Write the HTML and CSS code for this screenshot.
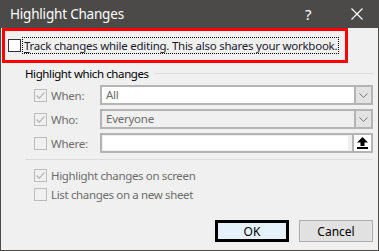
FILE: index.html
```html
<!DOCTYPE html>
<html>
  <head>
    <meta charset="utf-8" />
    <title>Highlight Changes</title>
    <link rel="stylesheet" href="styles.css">
  </head>
  <body>
    <div class="window">
      <div class="titlebar">
        <span class="title">Highlight Changes</span>
        <span class="help">?</span>
        <span class="close">
          <svg width="12" height="12" viewBox="0 0 12 12"><path d="M0.5 0.5 L11.5 11.5 M11.5 0.5 L0.5 11.5" stroke="#fff" stroke-width="1.2" fill="none"/></svg>
        </span>
      </div>

      <div class="track">
        <span class="box"></span>
        <span class="focus"><u>T</u>rack changes while editing. This also shares your workbook.</span>
      </div>

      <div class="group-head">
        <span class="group-label">Highlight which changes</span>
        <span class="line"></span>
      </div>

      <div class="row">
        <span class="box disabled checked"><svg width="11" height="11" viewBox="0 0 11 11"><path d="M1.5 5.5 L4.2 8.2 L9.5 2.5" stroke="#b9b9b9" stroke-width="1.3" fill="none"/></svg></span>
        <span class="row-label">When:</span>
        <div class="field white">
          <span class="value">All</span>
          <span class="drop"><svg width="9" height="5" viewBox="0 0 9 5"><path d="M0.5 0.5 L4.5 4.5 L8.5 0.5" stroke="#777" stroke-width="1" fill="none"/></svg></span>
        </div>
      </div>
      <div class="row">
        <span class="box disabled checked"><svg width="11" height="11" viewBox="0 0 11 11"><path d="M1.5 5.5 L4.2 8.2 L9.5 2.5" stroke="#b9b9b9" stroke-width="1.3" fill="none"/></svg></span>
        <span class="row-label">Who:</span>
        <div class="field">
          <span class="value">Everyone</span>
          <span class="drop"><svg width="9" height="5" viewBox="0 0 9 5"><path d="M0.5 0.5 L4.5 4.5 L8.5 0.5" stroke="#777" stroke-width="1" fill="none"/></svg></span>
        </div>
      </div>
      <div class="row">
        <span class="box disabled"></span>
        <span class="row-label">Where:</span>
        <div class="field where">
          <span class="input"></span>
          <span class="upload"><svg width="11" height="12" viewBox="0 0 11 12"><path d="M5.5 0 L11 5.5 L7.5 5.5 L7.5 9 L3.5 9 L3.5 5.5 L0 5.5 Z" fill="#000"/><rect x="0" y="10" width="11" height="2" fill="#000"/></svg></span>
        </div>
      </div>

      <div class="sep"></div>

      <div class="opt">
        <span class="box disabled checked"><svg width="11" height="11" viewBox="0 0 11 11"><path d="M1.5 5.5 L4.2 8.2 L9.5 2.5" stroke="#b9b9b9" stroke-width="1.3" fill="none"/></svg></span>
        <span class="row-label">Highlight changes on screen</span>
      </div>
      <div class="opt">
        <span class="box disabled"></span>
        <span class="row-label">List changes on a new sheet</span>
      </div>

      <div class="buttons">
        <button class="btn ok" type="button">OK</button>
        <button class="btn" type="button">Cancel</button>
      </div>
    </div>
  </body>
</html>
```

FILE: styles.css
```css
* {
    box-sizing: border-box;
}

body {
    margin: 0;
    font-family: 'Noto Sans', 'Open Sans', sans-serif;
    font-size: 11.5px;
    letter-spacing: -0.25px;
    color: #000;
}

.window {
    width: 379px;
    height: 251px;
    background-color: #f0f0f0;
    border: 1px solid #4b4a48;
    border-top: none;
    display: flex;
    flex-direction: column;
    white-space: nowrap;
}

.titlebar {
    height: 28px;
    margin: 0 -1px;
    background-color: #4b4a48;
    color: #fff;
    display: flex;
    align-items: center;
    padding-left: 10px;
    font-size: 13.5px;
    letter-spacing: -0.2px;
}

.title {
    flex: 1;
}

.help {
    width: 34px;
    font-size: 15px;
}

.close {
    width: 40px;
    display: flex;
    justify-content: center;
    padding-right: 4px;
}

.track {
    margin-left: 1px;
    width: 346px;
    height: 35px;
    border: 3px solid #ff0000;
    display: flex;
    align-items: center;
    padding-left: 3px;
}

.box {
    width: 13px;
    height: 13px;
    border: 1px solid #333;
    background-color: #fff;
    flex: none;
    display: flex;
    align-items: center;
    justify-content: center;
}

.box.disabled {
    border-color: #bcbcbc;
    background-color: #f0f0f0;
}

.focus {
    margin-left: 2px;
    padding: 0 1px;
    outline: 1px dotted #000;
    line-height: 15px;
    color: #1a1a2e;
}

.focus u {
    text-underline-offset: 2px;
}

.group-head {
    display: flex;
    align-items: center;
    margin: 1px 5px 0 24px;
    height: 18px;
}

.group-label {
    letter-spacing: -0.4px;
}

.line {
    flex: 1;
    height: 1px;
    background-color: #dcdcdc;
    margin-left: 6px;
}

.row {
    display: flex;
    align-items: center;
    height: 20px;
    margin: 3px 5px 0 33px;
}

.row + .row {
    margin-top: 4px;
}

.row-label {
    margin-left: 4px;
    color: #6d6d6d;
}

.row .row-label {
    width: 49px;
}

.field {
    flex: 1;
    height: 20px;
    border: 2px solid #b4b4b4;
    background-color: #f0f0f0;
    display: flex;
    align-items: stretch;
}

.field.white {
    background-color: #fff;
}

.value {
    flex: 1;
    padding-left: 4px;
    line-height: 16px;
    color: #6d6d6d;
}

.drop {
    width: 17px;
    border-left: 2px solid #b4b4b4;
    background-color: #e3e3e3;
    display: flex;
    align-items: center;
    justify-content: center;
}

.input {
    flex: 1;
    margin: 1px 4px 1px 1px;
    background-color: #fff;
}

.upload {
    width: 19px;
    border-left: 2px solid #b4b4b4;
    background-color: #fff;
    display: flex;
    align-items: center;
    justify-content: center;
}

.sep {
    height: 1px;
    background-color: #dcdcdc;
    margin: 6px 5px 0 24px;
}

.opt {
    display: flex;
    align-items: center;
    height: 19px;
    margin-left: 33px;
}

.opt .row-label {
    letter-spacing: -0.35px;
}

.sep + .opt {
    margin-top: 6px;
}

.buttons {
    display: flex;
    justify-content: flex-end;
    gap: 10px;
    margin: auto 5px 8px 0;
}

.btn {
    width: 74px;
    height: 22px;
    font-family: inherit;
    font-size: 12px;
    color: #000;
    background-color: #e1e1e1;
    border: 1px solid #adadad;
    padding: 0;
}

.ok {
    background-color: #e5f1fb;
    border: 3px solid #000;
}
```
